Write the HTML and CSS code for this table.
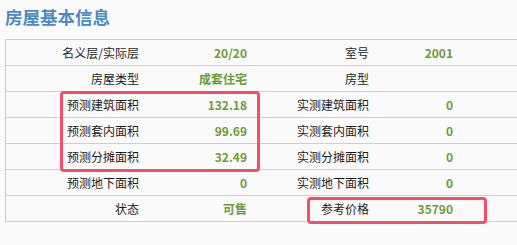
FILE: index.html
```html
<!DOCTYPE html>
<html lang="zh">
<head>
<meta charset="utf-8">
<link rel="stylesheet" href="styles.css">
</head>
<body>
<h2 class="title">房屋基本信息</h2>
<div class="table">
  <div class="row"><div class="lbl">名义层/实际层</div><div class="val">20/20</div><div class="lbl2">室号</div><div class="val2">2001</div><div class="rest"></div></div>
  <div class="row"><div class="lbl">房屋类型</div><div class="val">成套住宅</div><div class="lbl2">房型</div><div class="val2"></div><div class="rest"></div></div>
  <div class="row"><div class="lbl">预测建筑面积</div><div class="val">132.18</div><div class="lbl2">实测建筑面积</div><div class="val2">0</div><div class="rest"></div></div>
  <div class="row"><div class="lbl">预测套内面积</div><div class="val">99.69</div><div class="lbl2">实测套内面积</div><div class="val2">0</div><div class="rest"></div></div>
  <div class="row"><div class="lbl">预测分摊面积</div><div class="val">32.49</div><div class="lbl2">实测分摊面积</div><div class="val2">0</div><div class="rest"></div></div>
  <div class="row"><div class="lbl">预测地下面积</div><div class="val">0</div><div class="lbl2">实测地下面积</div><div class="val2">0</div><div class="rest"></div></div>
  <div class="row"><div class="lbl">状态</div><div class="val">可售</div><div class="lbl2">参考价格</div><div class="val2">35790</div><div class="rest"></div></div>
  <div class="mark mark-area"></div>
  <div class="mark mark-price"></div>
</div>
</body>
</html>
```
FILE: styles.css
```css
html, body {
  margin: 0;
  padding: 0;
  background: #fafafa;
  overflow: hidden;
  width: 517px;
  height: 245px;
}
body {
  font-family: "Noto Sans CJK SC", "Noto Sans", sans-serif;
  font-size: 12px;
  color: #1e1e1e;
}
.title {
  margin: 0;
  padding: 5px 0 0 5px;
  height: 39px;
  box-sizing: border-box;
  font-size: 17.5px;
  line-height: 24px;
  font-weight: bold;
  color: #4a8bc6;
}
.table {
  position: relative;
  margin-left: 5px;
  width: 512px;
  border-top: 1px solid #cfcfcf;
  border-left: 1px solid #cfcfcf;
}
.row {
  display: grid;
  grid-template-columns: 144px 108px 122px 84px 1fr;
  height: 25px;
  line-height: 25px;
  border-bottom: 1px solid #cfcfcf;
}
.lbl, .val, .lbl2, .val2 {
  text-align: right;
  padding-right: 11px;
  white-space: nowrap;
}
.val, .val2 {
  font-weight: bold;
  color: #6f9a35;
}
.mark {
  position: absolute;
  border: 3px solid #f24f6b;
  border-radius: 4px;
  box-sizing: border-box;
}
.mark-area {
  left: 54px;
  top: 51px;
  width: 200px;
  height: 81px;
}
.mark-price {
  left: 301px;
  top: 157px;
  width: 180px;
  height: 27px;
}
```
